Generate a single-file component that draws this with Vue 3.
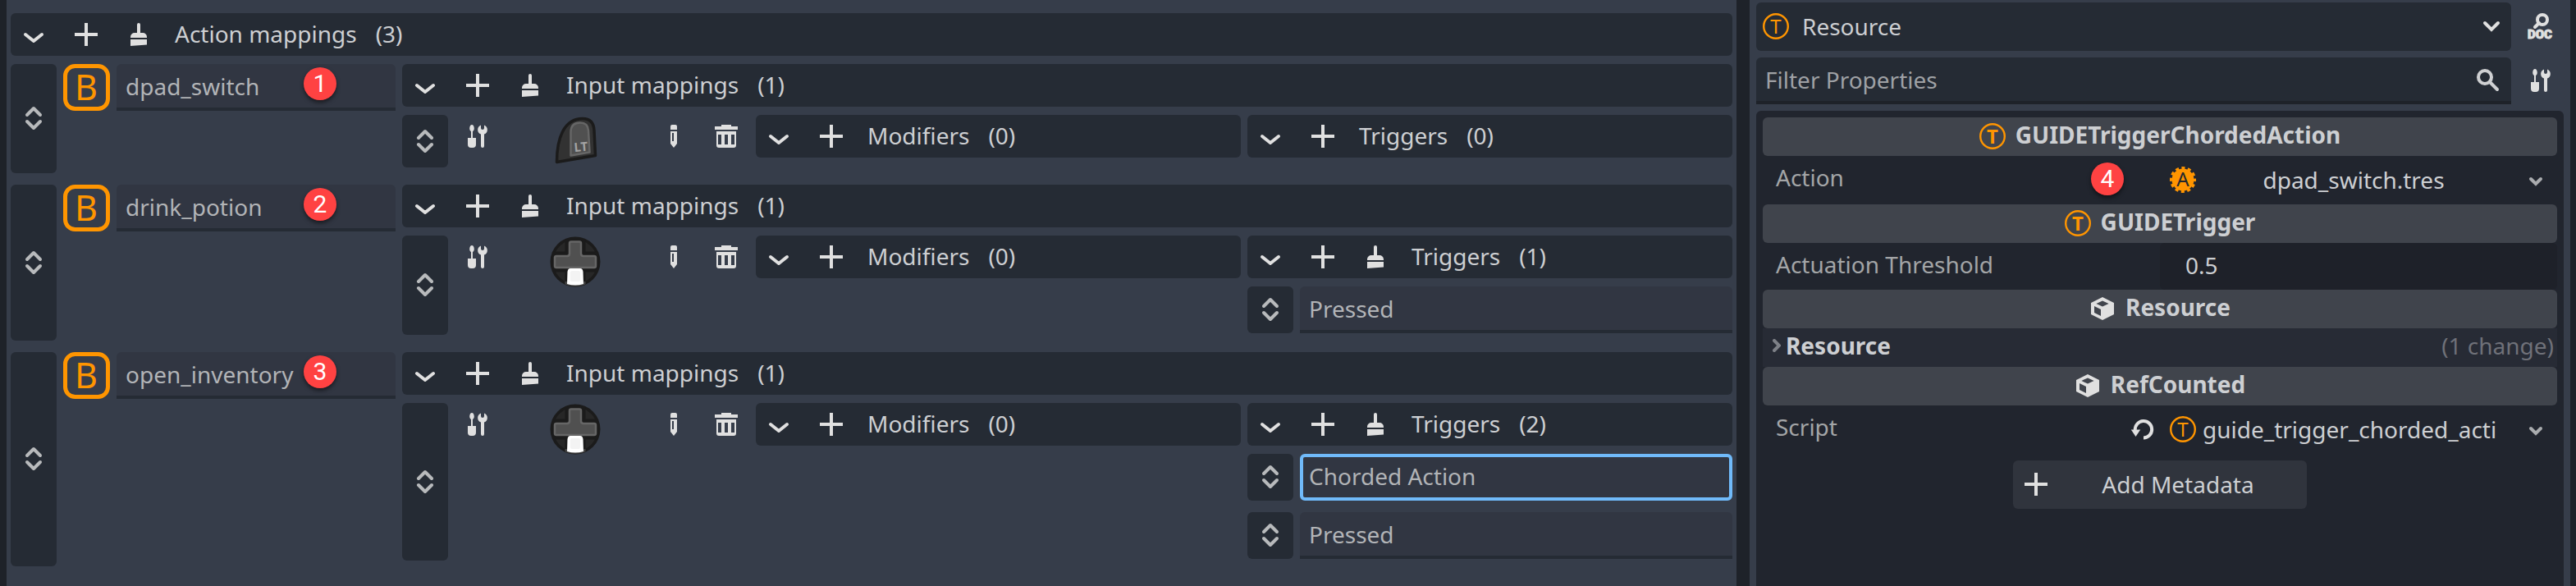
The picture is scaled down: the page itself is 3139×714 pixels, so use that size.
<script setup>
import { ref } from 'vue'

const actions = ref([
  {
    name: 'dpad_switch',
    marker: 1,
    inputs: [{ icon: 'trigger', triggers: [] }],
  },
  {
    name: 'drink_potion',
    marker: 2,
    inputs: [{ icon: 'dpad', triggers: [{ label: 'Pressed' }] }],
  },
  {
    name: 'open_inventory',
    marker: 3,
    inputs: [
      {
        icon: 'dpad',
        triggers: [{ label: 'Chorded Action', selected: true }, { label: 'Pressed' }],
      },
    ],
  },
])
const filter = ref('')
const threshold = ref('0.5')
</script>

<template>
  <svg class="sprite" aria-hidden="true">
    <symbol id="i-down" viewBox="0 0 16 16">
      <path d="M3 8l5 4 5-4" fill="none" stroke="currentColor" stroke-width="2" stroke-linecap="round" stroke-linejoin="round" />
    </symbol>
    <symbol id="i-plus" viewBox="0 0 16 16"><path d="M7 1h2v6h6v2H9v6H7V9H1V7h6z" /></symbol>
    <symbol id="i-brush" viewBox="0 0 16 16">
      <path d="M8 1a1 1 0 0 0-1 1v5H5.500a2.500 2.500 0 0 0-2.500 2.500V10h10v-.5A2.500 2.500 0 0 0 10.500 7H9V2a1 1 0 0 0-1-1zM3 11h10v3.200L3 15z" />
    </symbol>
    <symbol id="i-grip" viewBox="0 0 16 16">
      <path d="M4 6l4-4 4 4M4 10l4 4 4-4" fill="none" stroke="currentColor" stroke-width="2" stroke-linecap="round" stroke-linejoin="round" />
    </symbol>
    <symbol id="i-tools" viewBox="0 0 16 16">
      <path d="M4.500 1C3.700 1 3.100 2 3.100 3.200c0 .8.4 1.500.9 1.800v4H2v4a2 2 0 0 0 2 2h1a2 2 0 0 0 2-2V9H5V5c.5-.3.9-1 .9-1.800C5.900 2 5.300 1 4.500 1z" />
      <path d="M10 1.200a3 3 0 0 0 0 5.600V14a1 1 0 0 0 2 0V6.800a3 3 0 0 0 0-5.600V3a1 1 0 0 1-2 0z" />
    </symbol>
    <symbol id="i-pencil" viewBox="0 0 16 16">
      <path d="M7 1a1 1 0 0 0-1 1v2h4V2a1 1 0 0 0-1-1z" />
      <path fill-rule="evenodd" d="M6 5h4v7.500L8 15l-2-2.500zM7 6v5h1V6z" />
    </symbol>
    <symbol id="i-trash" viewBox="0 0 16 16">
      <path d="M5 1h6v1h4v2H1V2h4z" />
      <path fill-rule="evenodd" d="M2 5h12v8.500a1.500 1.500 0 0 1-1.500 1.500h-9A1.500 1.500 0 0 1 2 13.500zM3 7v6h2V7zM7 7v6h2V7zM11 7v6h2V7z" />
    </symbol>
    <symbol id="i-cube" viewBox="0 0 16 16">
      <path fill-rule="evenodd" d="M8 1l7 3.500v7L8 15l-7-3.500v-7zM8 3.200L4.200 5 8 6.800 11.800 5zM3 6.500v4l4 2V8.500z" />
    </symbol>
    <symbol id="i-t" viewBox="0 0 32 32">
      <circle cx="16" cy="16" r="14.800" fill="none" stroke="currentColor" stroke-width="2.400" />
      <text x="16" y="25" font-size="24" text-anchor="middle">T</text>
    </symbol>
    <symbol id="i-a" viewBox="0 0 32 32">
      <circle cx="16" cy="16" r="13.500" />
      <circle cx="16" cy="16" r="14" fill="none" stroke="currentColor" stroke-width="4" stroke-dasharray="4 3.330" stroke-dashoffset="2" />
      <text x="16" y="24" font-size="24" text-anchor="middle" fill="#21262e">A</text>
    </symbol>
    <symbol id="i-b" viewBox="0 0 57 57">
      <rect x="2.500" y="2.500" width="52" height="52" rx="12" fill="none" stroke="currentColor" stroke-width="5" />
      <text x="14" y="44" font-size="43">B</text>
    </symbol>
    <symbol id="i-doc" viewBox="0 0 32 32">
      <path d="M14 12l-5 5" fill="none" stroke="currentColor" stroke-width="4" stroke-linecap="round" />
      <circle cx="18" cy="8" r="6" fill="none" stroke="currentColor" stroke-width="4" />
      <text x="15" y="31" font-family="Roboto, sans-serif" font-size="15" font-weight="900" text-anchor="middle" stroke="currentColor" stroke-width="1">DOC</text>
    </symbol>
    <symbol id="i-search" viewBox="0 0 32 32">
      <path d="M18 18l9 9" fill="none" stroke="currentColor" stroke-width="4" stroke-linecap="round" />
      <circle cx="12" cy="12" r="8" fill="none" stroke="currentColor" stroke-width="4" />
    </symbol>
    <symbol id="i-select" viewBox="0 0 32 32">
      <path d="M8 12l8 8 8-8" fill="none" stroke="currentColor" stroke-width="4" stroke-linecap="round" />
    </symbol>
    <symbol id="i-more" viewBox="0 0 32 32">
      <path d="M10 15l6 6 6-6" fill="none" stroke="currentColor" stroke-width="4" stroke-linecap="round" />
    </symbol>
    <symbol id="i-revert" viewBox="0 0 32 32">
      <path d="M16 26.500a10.200 10.200 0 1 0-10.200-9.500" fill="none" stroke="currentColor" stroke-width="4" />
      <path d="M.8 16.500h11.400L6.500 25z" />
    </symbol>
    <symbol id="i-trigger" viewBox="0 0 64 64">
      <path d="M9.500 57.500L56.500 49.500 55 19C54.500 9 49 4.500 41 4.500 18 4.500 9.500 29 9.500 57.500z" fill="#323232" stroke="#1b1b1b" stroke-width="3.500" stroke-linejoin="round" />
      <path d="M26.500 49.500L49.500 45.500 48 19C47.500 12 43.500 9.500 38 9.500 30 9.500 26.500 14 26.500 21z" fill="#505050" stroke="#666" stroke-width="2.500" stroke-linejoin="round" />
      <text x="31" y="45" font-size="15" font-weight="700" fill="#a3a3a3" transform="rotate(-5 31 45)">LT</text>
    </symbol>
    <symbol id="i-dpad" viewBox="0 0 64 64">
      <circle cx="32" cy="32" r="30.500" fill="#1b1b1b" />
      <circle cx="32" cy="32" r="27" fill="#272727" />
      <path d="M19.500 5h25v14.500H59v25H44.500V60h-25V44.500H5v-25h14.500z" fill="#1b1b1b" />
      <path d="M19.500 56v3.500Q32 64 44.500 59.500V56z" fill="#444" />
      <path d="M27 7.500h10q2 0 2 2V22q0 3 3 3h13q2 0 2 2v10q0 2-2 2H9q-2 0-2-2V27q0-2 2-2h13q3 0 3-3V9.500q0-2 2-2z" fill="#505050" stroke="#666" stroke-width="2.500" />
      <path d="M26 40h12q3 0 3.500 4l.5 15Q32 62 22 59l.5-15q.5-4 3.500-4z" fill="#fff" />
      <rect x="26" y="43" width="12" height="13" rx="2" fill="#f3f3f3" />
    </symbol>
  </svg>

  <div class="editor">
    <main class="mappings">
      <header class="bar">
        <button class="tool" aria-label="Collapse action mappings"><svg class="icon"><use href="#i-down" /></svg></button>
        <button class="tool" aria-label="Add action mapping"><svg class="icon"><use href="#i-plus" /></svg></button>
        <button class="tool" aria-label="Clear action mappings"><svg class="icon"><use href="#i-brush" /></svg></button>
        <span class="title">Action mappings</span>
        <span class="count">(3)</span>
      </header>

      <div class="action-list">
        <section v-for="action in actions" :key="action.marker" class="action">
          <button class="grip" aria-label="Reorder action"><svg class="icon"><use href="#i-grip" /></svg></button>
          <svg class="type-icon"><use href="#i-b" /></svg>
          <div class="name">
            <input v-model="action.name" class="field" type="text" aria-label="Action name" />
            <span class="marker">{{ action.marker }}</span>
          </div>
          <div class="inputs">
            <header class="bar">
              <button class="tool" aria-label="Collapse input mappings"><svg class="icon"><use href="#i-down" /></svg></button>
              <button class="tool" aria-label="Add input mapping"><svg class="icon"><use href="#i-plus" /></svg></button>
              <button class="tool" aria-label="Clear input mappings"><svg class="icon"><use href="#i-brush" /></svg></button>
              <span class="title">Input mappings</span>
              <span class="count">({{ action.inputs.length }})</span>
            </header>
            <div v-for="(input, i) in action.inputs" :key="i" class="mapping">
              <button class="grip" aria-label="Reorder input"><svg class="icon"><use href="#i-grip" /></svg></button>
              <button class="tool" aria-label="Configure input"><svg class="icon"><use href="#i-tools" /></svg></button>
              <svg class="preview"><use :href="'#i-' + input.icon" /></svg>
              <button class="tool" aria-label="Edit input"><svg class="icon"><use href="#i-pencil" /></svg></button>
              <button class="tool" aria-label="Delete input"><svg class="icon"><use href="#i-trash" /></svg></button>
              <div class="column">
                <header class="bar">
                  <button class="tool" aria-label="Collapse modifiers"><svg class="icon"><use href="#i-down" /></svg></button>
                  <button class="tool" aria-label="Add modifier"><svg class="icon"><use href="#i-plus" /></svg></button>
                  <span class="title">Modifiers</span>
                  <span class="count">(0)</span>
                </header>
              </div>
              <div class="column">
                <header class="bar">
                  <button class="tool" aria-label="Collapse triggers"><svg class="icon"><use href="#i-down" /></svg></button>
                  <button class="tool" aria-label="Add trigger"><svg class="icon"><use href="#i-plus" /></svg></button>
                  <button v-if="input.triggers.length" class="tool" aria-label="Clear triggers"><svg class="icon"><use href="#i-brush" /></svg></button>
                  <span class="title">Triggers</span>
                  <span class="count">({{ input.triggers.length }})</span>
                </header>
                <div v-if="input.triggers.length" class="trigger-list">
                  <div v-for="(trigger, t) in input.triggers" :key="t" class="trigger">
                    <button class="grip" aria-label="Reorder trigger"><svg class="icon"><use href="#i-grip" /></svg></button>
                    <input v-model="trigger.label" class="field" :class="{ selected: trigger.selected }" type="text" aria-label="Trigger" />
                  </div>
                </div>
              </div>
            </div>
          </div>
        </section>
      </div>
    </main>

    <aside class="inspector">
      <div class="top-row">
        <div class="stack">
          <select class="resource" aria-label="Edited object">
            <option>Resource</option>
          </select>
          <svg class="icon lead orange"><use href="#i-t" /></svg>
          <svg class="icon trail"><use href="#i-select" /></svg>
        </div>
        <button class="tool" aria-label="Open documentation"><svg class="icon"><use href="#i-doc" /></svg></button>
      </div>
      <div class="top-row">
        <div class="stack">
          <input v-model="filter" class="field filter" type="text" placeholder="Filter Properties" aria-label="Filter Properties" />
          <svg class="icon trail search"><use href="#i-search" /></svg>
        </div>
        <button class="tool" aria-label="Property settings"><svg class="icon"><use href="#i-tools" /></svg></button>
      </div>

      <div class="properties">
        <h2 class="category"><svg class="icon orange"><use href="#i-t" /></svg>GUIDETriggerChordedAction</h2>
        <div class="property">
          <div class="label">
            <span>Action</span>
            <span class="marker">4</span>
          </div>
          <div class="value">
            <button class="picker centered"><svg class="icon orange"><use href="#i-a" /></svg><span>dpad_switch.tres</span></button>
            <button class="more" aria-label="Action options"><svg class="icon"><use href="#i-more" /></svg></button>
          </div>
        </div>

        <h2 class="category"><svg class="icon orange"><use href="#i-t" /></svg>GUIDETrigger</h2>
        <div class="property">
          <label class="label" for="threshold">Actuation Threshold</label>
          <input id="threshold" v-model="threshold" class="number" type="text" />
        </div>

        <h2 class="category"><svg class="icon"><use href="#i-cube" /></svg>Resource</h2>
        <button class="fold">
          <svg class="fold-arrow" viewBox="0 0 10 16"><path d="M2 2l6 6-6 6" /></svg>
          <span>Resource</span>
          <span class="changes">(1 change)</span>
        </button>

        <h2 class="category"><svg class="icon"><use href="#i-cube" /></svg>RefCounted</h2>
        <div class="property">
          <div class="label">
            <span>Script</span>
            <button class="revert" aria-label="Revert script"><svg class="icon"><use href="#i-revert" /></svg></button>
          </div>
          <div class="value">
            <button class="picker"><svg class="icon orange"><use href="#i-t" /></svg><span>guide_trigger_chorded_acti</span></button>
            <button class="more" aria-label="Script options"><svg class="icon"><use href="#i-more" /></svg></button>
          </div>
        </div>

        <button class="add"><svg class="icon"><use href="#i-plus" /></svg><span>Add Metadata</span></button>
      </div>
    </aside>
  </div>
</template>

<style>
body {
  margin: 0;
  background: #1e2229;
}
</style>

<style scoped>
.sprite {
  display: none;
}
.editor {
  display: grid;
  grid-template-columns: minmax(0, 1fr) 1000px;
  gap: 16px;
  box-sizing: border-box;
  min-height: 100vh;
  padding: 0 7px 0 8px;
  background: #1e2229;
  color: #cdcfd2;
  font: 28px/38px "Noto Sans", sans-serif;
}
.editor *,
.editor *::before {
  box-sizing: border-box;
}
button,
input,
select {
  margin: 0;
  padding: 0;
  border: 0;
  border-radius: 6px;
  outline: 0;
  background: none;
  color: inherit;
  font: inherit;
}
.icon {
  display: block;
  flex: none;
  width: 32px;
  height: 32px;
  color: #e0e0e0;
  fill: currentColor;
}
.orange {
  color: #ff9500;
}

.mappings {
  display: flex;
  flex-direction: column;
  gap: 10px;
  padding: 16px 5px;
  background: #363d4a;
}
.bar {
  display: flex;
  align-items: center;
  gap: 8px;
  height: 52px;
  border-radius: 6px;
  background: #252b34;
  white-space: nowrap;
}
.tool {
  display: grid;
  place-items: center;
  flex: none;
  width: 56px;
  height: 52px;
}
.title {
  padding: 0 15px 2px 8px;
}
.count {
  padding-bottom: 2px;
}
.action-list {
  display: flex;
  flex-direction: column;
  gap: 14px;
}
.action {
  display: grid;
  grid-template-columns: 56px 57px 340px minmax(0, 1fr);
  gap: 8px;
}
.grip {
  display: grid;
  place-items: center;
  padding-bottom: 1px;
  background: #252b34;
}
.grip .icon {
  color: #b8babc;
}
.type-icon {
  width: 57px;
  height: 57px;
  color: #ff9500;
  fill: currentColor;
}
.name {
  position: relative;
}
.field {
  display: block;
  width: 100%;
  height: 57px;
  padding: 8px 11px 7px;
  border-bottom: 4px solid #252b34;
  border-radius: 6px 6px 0 0;
  background: #313642;
  color: #b2b4b7;
}
.selected {
  padding: 4px 7px 7px;
  border: 4px solid #70bafa;
  border-radius: 6px;
}
.marker {
  position: absolute;
  top: 4px;
  right: 72px;
  width: 40px;
  height: 40px;
  border-radius: 50%;
  background: #ff4242;
  box-shadow: 0 3px 5px rgba(0, 0, 0, 0.5);
  color: #fff;
  font: 30px/40px Roboto, sans-serif;
  text-align: center;
}
.inputs {
  display: flex;
  flex-direction: column;
  gap: 10px;
  padding-bottom: 7px;
}
.mapping {
  display: grid;
  grid-template-columns: 56px 56px 167px 56px 56px minmax(0, 1fr) minmax(0, 1fr);
  gap: 8px;
}
.preview {
  justify-self: center;
  width: 64px;
  height: 64px;
  margin-right: 1px;
}
.column {
  display: flex;
  flex-direction: column;
  gap: 10px;
}
.trigger-list {
  display: flex;
  flex-direction: column;
  gap: 14px;
  padding-bottom: 2px;
}
.trigger {
  display: grid;
  grid-template-columns: 56px minmax(0, 1fr);
  gap: 8px;
}

.inspector {
  display: flex;
  flex-direction: column;
  gap: 8px;
  padding: 3px 8px 0;
  background: #363d4a;
}
.top-row {
  display: grid;
  grid-template-columns: minmax(0, 1fr) 56px;
  gap: 8px;
}
.top-row .tool {
  height: 58px;
}
.top-row + .top-row .tool {
  height: 56px;
}
.stack {
  display: grid;
  align-items: center;
}
.stack > * {
  grid-area: 1 / 1;
}
.stack .icon {
  margin-bottom: 1px;
  pointer-events: none;
}
.lead {
  margin-left: 8px;
}
.trail {
  justify-self: end;
  margin-right: 8px;
}
.search {
  margin-right: 12px;
  color: #cfd0d2;
}
.resource {
  width: 100%;
  height: 59px;
  padding: 0 56px 1px;
  appearance: none;
  background: #252b34;
}
.filter {
  padding-right: 56px;
  border-bottom-color: #1e2229;
  background: #252b34;
}
.filter::placeholder {
  color: #9fa1a5;
  opacity: 1;
}
.properties {
  display: flex;
  flex-direction: column;
  flex: 1;
  padding: 8px;
  border-radius: 6px 6px 0 0;
  background: #21252e;
}
.category {
  display: flex;
  justify-content: center;
  gap: 12px;
  height: 47px;
  margin: 0;
  padding-top: 2px;
  border-radius: 6px;
  background: #40444c;
  font-size: 28px;
  font-weight: 700;
}
.category .icon {
  margin-top: 5px;
}
.property {
  display: grid;
  grid-template-columns: minmax(0, 1fr) minmax(0, 1fr);
}
.label {
  display: flex;
  justify-content: space-between;
  position: relative;
  padding: 7px 4px 0 16px;
  color: #a3a5a7;
}
.label .marker {
  top: 8px;
  right: 44px;
}
.revert {
  height: 32px;
  margin-top: 6px;
}
.value {
  display: grid;
  grid-template-columns: minmax(0, 1fr) 52px;
  height: 59px;
}
.picker {
  display: flex;
  align-items: center;
  gap: 8px;
  padding: 0 12px 1px;
  overflow: hidden;
  text-align: left;
  white-space: nowrap;
}
.picker span {
  flex: 1;
}
.centered {
  text-align: center;
}
.more {
  display: grid;
  place-items: center;
  padding-bottom: 1px;
}
.more .icon {
  color: #a9abae;
}
.number {
  width: 100%;
  height: 57px;
  padding: 0 31px 3px;
  background: #1e2129;
}
.fold {
  display: flex;
  align-items: center;
  gap: 6px;
  height: 47px;
  padding: 0 4px 5px 12px;
  border-radius: 0;
  background: #272b35;
  font-weight: 700;
}
.fold-arrow {
  width: 10px;
  height: 16px;
  fill: none;
  stroke: #7d8087;
  stroke-width: 4;
  stroke-linecap: round;
}
.changes {
  margin-left: auto;
  color: #6f7179;
  font-weight: 400;
}
.add {
  display: flex;
  align-items: center;
  align-self: center;
  height: 59px;
  margin-top: 8px;
  padding: 0 0 1px 12px;
  background: #30343d;
}
.add span {
  padding: 0 64px;
}
</style>
